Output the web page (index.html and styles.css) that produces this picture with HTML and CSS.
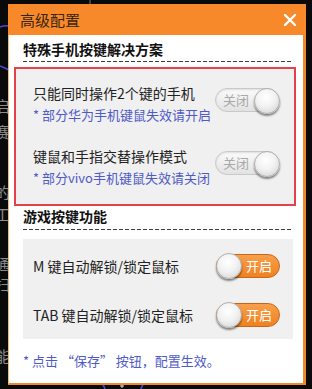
FILE: index.html
```html
<!DOCTYPE html>
<html lang="zh-CN">
<head>
<meta charset="utf-8">
<title>高级配置</title>
<link rel="stylesheet" href="styles.css">
</head>
<body>
<div class="backdrop">
  <span class="bg-char" style="top:98px">启</span>
  <span class="bg-char" style="top:124px">赛</span>
  <span class="bg-char" style="top:184px">的</span>
  <span class="bg-char" style="top:206px">工</span>
  <span class="bg-char" style="top:256px">通</span>
  <span class="bg-char" style="top:276px">扫</span>
  <span class="bg-char" style="top:348px">能</span>
  <svg class="bg-arcs" width="312" height="389" viewBox="0 0 312 389">
    <path d="M0 27 Q5 25 9 26" stroke="#4a4ad8" stroke-width="1.5" fill="none"/>
    <path d="M0 66 Q5 68 9 70" stroke="#4a4ad8" stroke-width="1.5" fill="none"/>
    <path d="M102 383 Q104 386 105 389" stroke="#4a4ad8" stroke-width="1.5" fill="none"/>
    <path d="M144 383 Q142 386 141 389" stroke="#4a4ad8" stroke-width="1.5" fill="none"/>
    <path d="M122 384 L122 388 M120 386 L124 386" stroke="#ddd" stroke-width="1" fill="none"/>
    <path d="M90 0 L90 4" stroke="#777" stroke-width="1"/>
  </svg>
</div>

<div class="dialog">
  <div class="titlebar">
    <span class="title">高级配置</span>
    <svg class="close" width="14" height="14" viewBox="0 0 14 14">
      <path d="M2 2 L12 12 M12 2 L2 12" stroke="#fff" stroke-width="2.4" stroke-linecap="round"/>
    </svg>
  </div>
  <div class="panel">
    <h2 class="heading first">特殊手机按键解决方案</h2>
    <div class="dash"></div>
    <div class="box highlight">
      <div class="row row-a">
        <div class="labels">
          <div class="label">只能同时操作2个键的手机</div>
          <div class="hint">* 部分华为手机键鼠失效请开启</div>
        </div>
        <div class="toggle off"><span class="tg-text">关闭</span><span class="knob"></span></div>
      </div>
      <div class="row row-b">
        <div class="labels">
          <div class="label">键鼠和手指交替操作模式</div>
          <div class="hint">* 部分vivo手机键鼠失效请关闭</div>
        </div>
        <div class="toggle off"><span class="tg-text">关闭</span><span class="knob"></span></div>
      </div>
    </div>
    <h2 class="heading second">游戏按键功能</h2>
    <div class="dash dash2"></div>
    <div class="box plain">
      <div class="line">
        <span class="label">M 键自动解锁/锁定鼠标</span>
        <div class="toggle on"><span class="knob"></span><span class="tg-text">开启</span></div>
      </div>
      <div class="line">
        <span class="label">TAB 键自动解锁/锁定鼠标</span>
        <div class="toggle on"><span class="knob"></span><span class="tg-text">开启</span></div>
      </div>
    </div>
    <div class="footer">* 点击 “保存” 按钮，配置生效。</div>
  </div>
</div>
</body>
</html>
```

FILE: styles.css
```css
html, body {
  margin: 0;
  padding: 0;
}
body {
  background: #0a0a0a;
  width: 312px;
  height: 389px;
  overflow: hidden;
  position: relative;
  font-family: "Noto Sans CJK SC", "Noto Sans", sans-serif;
}
.backdrop {
  position: absolute;
  left: 0;
  top: 0;
  width: 312px;
  height: 389px;
}
.bg-char {
  position: absolute;
  left: -5px;
  font-size: 15px;
  line-height: 16px;
  color: #8c8c8c;
}
.bg-arcs {
  position: absolute;
  left: 0;
  top: 0;
}
.dialog {
  position: relative;
  margin: 4px 0 0 8px;
  width: 298px;
}
.titlebar {
  height: 31px;
  background: #f7892a;
  display: flex;
  align-items: center;
  justify-content: space-between;
  padding: 0 9px 0 12px;
}
.title {
  font-size: 15px;
  color: #3a2410;
  line-height: 20px;
}
.close {
  display: block;
}
.panel {
  background: #fff;
  border-left: 1px solid #f4b77a;
  border-right: 3px solid #ee8a2c;
  border-bottom: 2px solid #ee8a2c;
  padding: 4px 0 12px;
  display: flex;
  flex-direction: column;
}
.heading {
  margin: 0 0 0 14px;
  font-size: 14px;
  font-weight: bold;
  line-height: 20px;
  color: #111;
}
.dash {
  height: 1px;
  margin: 2px 11px 0 14px;
  background: repeating-linear-gradient(to right, #3a3a3a 0 4px, transparent 4px 6px);
}
.dash2 {
  margin-top: 3px;
}
.box {
  background: #f0f0f0;
}
.highlight {
  margin: 5px 7px 0 5px;
  border: 2px solid #e6404a;
  height: 135px;
  padding: 0 15px 0 17px;
}
.row {
  display: flex;
  justify-content: space-between;
  align-items: flex-start;
}
.row-a {
  padding-top: 14px;
}
.row-b {
  padding-top: 21px;
}
.labels {
  display: flex;
  flex-direction: column;
  gap: 2px;
}
.label {
  font-size: 14px;
  line-height: 20px;
  color: #222;
  white-space: nowrap;
}
.hint {
  font-size: 13px;
  line-height: 20px;
  color: #4f5ac6;
  white-space: nowrap;
}
.row .toggle {
  margin-top: 5px;
}
.plain {
  margin: 9px 10px 0 14px;
  padding: 2px 13px 0 10px;
  height: 98px;
}
.line {
  height: 49px;
  display: flex;
  align-items: center;
  justify-content: space-between;
}
.toggle {
  width: 62px;
  height: 22px;
  border-radius: 13px;
  display: flex;
  align-items: center;
  box-sizing: content-box;
}
.toggle.off {
  background: linear-gradient(#fbfbfb, #e2e2e2);
  border: 1px solid #c9c9c9;
  box-shadow: inset 0 1px 2px rgba(0, 0, 0, 0.12);
  justify-content: space-between;
}
.toggle.on {
  background: linear-gradient(#f7a04c, #ef8120);
  border: 1px solid #c8671a;
  justify-content: space-between;
}
.tg-text {
  font-size: 13px;
  line-height: 16px;
}
.off .tg-text {
  color: #a8a8a8;
  margin-left: 7px;
}
.on .tg-text {
  color: #fff;
  margin-right: 7px;
}
.knob {
  width: 26px;
  height: 26px;
  border-radius: 50%;
  background: radial-gradient(circle at 45% 35%, #ffffff 0%, #f2f2f2 45%, #cfcfcf 100%);
  border: 1px solid #b0b0b0;
  box-shadow: 0 2px 2px rgba(0, 0, 0, 0.45);
  box-sizing: border-box;
  flex: none;
}
.off .knob {
  margin-right: -2px;
  margin-top: 2px;
}
.on .knob {
  margin-left: -1px;
  margin-top: 1px;
}
.footer {
  margin: 12px 0 0 14px;
  font-size: 13px;
  line-height: 20px;
  color: #4f5ac6;
  white-space: nowrap;
}
```
